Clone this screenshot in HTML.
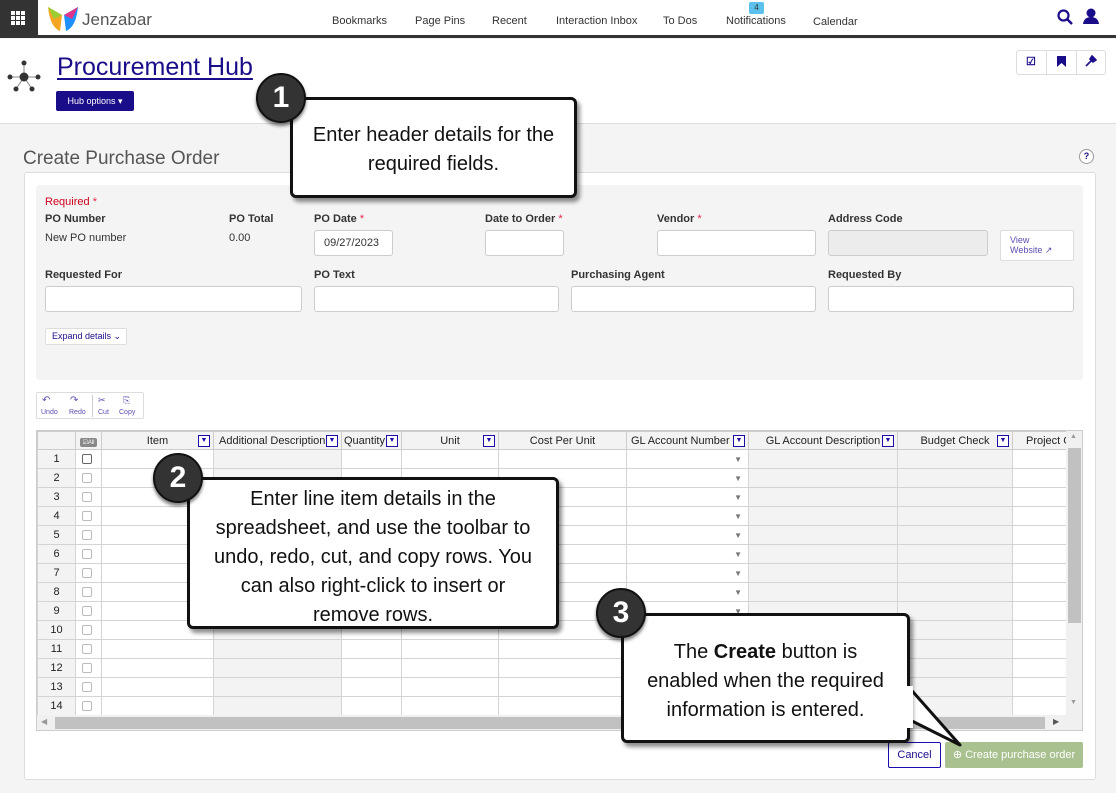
<!DOCTYPE html>
<html><head><meta charset="utf-8"><style>
*{box-sizing:border-box;margin:0;padding:0}
body{width:1116px;height:793px;position:relative;overflow:hidden;background:#f4f4f4;font-family:"Liberation Sans",Arial,sans-serif;color:#333}
.a{position:absolute}
.top{left:0;top:0;width:1116px;height:38px;background:#fff;border-bottom:3px solid #333}
.nav{top:15px;font-size:11px;color:#333}
.lbl{font-size:11px;font-weight:bold;color:#333}
.star{color:#e0284a;font-weight:normal}
.inp{background:#fff;border:1px solid #ccc;border-radius:3px;height:26px}
table{border-collapse:collapse;table-layout:fixed;font-size:11px}
td{border:1px solid #d4d4d4;height:19px;padding:0}
th{border:1px solid #ccc;height:18px;background:#f3f3f3;font-weight:normal;color:#222;font-size:11px;position:relative;white-space:nowrap;overflow:hidden}
.fb{position:absolute;right:3px;top:3px;width:12px;height:12px;border:1px solid #1a0dab;background:#fff;font-size:7px;line-height:10px;color:#1a0dab;text-align:center}
.g{background:#f3f3f3}
.rn{background:#f3f3f3;text-align:center;color:#222}
.cb{display:inline-block;width:10px;height:10px;border:1px solid #bbb;border-radius:2px;margin-left:6px;vertical-align:middle}
.dd{text-align:right;color:#777;font-size:8px;padding-right:6px}
.box{background:#fff;border:3px solid #111;border-radius:6px;box-shadow:3px 4px 4px rgba(0,0,0,.45);font-family:"Liberation Sans",sans-serif;font-size:20px;color:#111;text-align:center;line-height:29px}
.circ{width:50px;height:50px;border-radius:50%;background:#333;border:2px solid #111;box-shadow:0 3px 3px rgba(0,0,0,.5);color:#fff;font-weight:bold;font-size:30px;text-align:center;line-height:46px}
</style></head><body>
<div class="a top"></div>
<div class="a" style="left:0;top:0;width:38px;height:36px;background:#333"></div>
<svg class="a" style="left:11px;top:11px" width="14" height="14"><g fill="#fff"><rect x="0" y="0" width="4" height="4"/><rect x="5" y="0" width="4" height="4"/><rect x="10" y="0" width="4" height="4"/><rect x="0" y="5" width="4" height="4"/><rect x="5" y="5" width="4" height="4"/><rect x="10" y="5" width="4" height="4"/><rect x="0" y="10" width="4" height="4"/><rect x="5" y="10" width="4" height="4"/><rect x="10" y="10" width="4" height="4"/></g></svg>
<svg class="a" style="left:46px;top:5px" width="34" height="28"><path d="M2 2 L16 10 L14 26 Q4 22 2 2Z" fill="#f5a623"/><path d="M2 2 L16 10 L8 14Z" fill="#9acd32"/><path d="M32 2 L18 10 L20 26 Q30 22 32 2Z" fill="#1e90ff"/><path d="M32 2 L18 10 L26 14Z" fill="#e0338a"/></svg>
<div class="a" style="left:82px;top:10px;font-size:17px;color:#555">Jenzabar</div>
<div class="a nav" style="left:332px">Bookmarks</div>
<div class="a nav" style="left:415px">Page Pins</div>
<div class="a nav" style="left:492px">Recent</div>
<div class="a nav" style="left:556px">Interaction Inbox</div>
<div class="a nav" style="left:663px">To Dos</div>
<div class="a" style="left:749px;top:2px;width:15px;height:12px;background:#5bc0eb;border-radius:2px;font-size:8px;text-align:center;line-height:12px">4</div>
<div class="a nav" style="left:726px;top:15px">Notifications</div>
<div class="a nav" style="left:813px;top:16px">Calendar</div>
<svg class="a" style="left:1057px;top:9px" width="16" height="16"><circle cx="6.5" cy="6.5" r="5" fill="none" stroke="#1a0d8a" stroke-width="2.2"/><line x1="10" y1="10" x2="15" y2="15" stroke="#1a0d8a" stroke-width="2.5"/></svg>
<svg class="a" style="left:1083px;top:8px" width="16" height="16"><circle cx="8" cy="5" r="4.5" fill="#1a0d8a"/><path d="M0 16 Q1 9 8 9 Q15 9 16 16Z" fill="#1a0d8a"/></svg>
<div class="a" style="left:0;top:39px;width:1116px;height:85px;background:#fff;border-bottom:1px solid #ddd"></div>
<svg class="a" style="left:6px;top:60px" width="36" height="34"><g stroke="#888" stroke-width="1"><line x1="18" y1="17" x2="18" y2="3"/><line x1="18" y1="17" x2="4" y2="17"/><line x1="18" y1="17" x2="32" y2="17"/><line x1="18" y1="17" x2="10" y2="29"/><line x1="18" y1="17" x2="26" y2="29"/></g><g fill="#333"><circle cx="18" cy="17" r="4.5"/><circle cx="18" cy="3" r="2.5"/><circle cx="4" cy="17" r="2.5"/><circle cx="32" cy="17" r="2.5"/><circle cx="10" cy="29" r="2.5"/><circle cx="26" cy="29" r="2.5"/></g></svg>
<div class="a" style="left:57px;top:53px;font-size:25px;color:#1a0d8a;text-decoration:underline;text-underline-offset:3px">Procurement Hub</div>
<div class="a" style="left:56px;top:91px;width:78px;height:20px;background:#1a0d8a;border-radius:2px;color:#fff;font-size:9px;line-height:20px;text-align:center">Hub options ▾</div>
<div class="a" style="left:1016px;top:50px;width:90px;height:25px;background:#fff;border:1px solid #ddd;border-radius:3px"></div>
<div class="a" style="left:1046px;top:51px;width:1px;height:23px;background:#ddd"></div>
<div class="a" style="left:1076px;top:51px;width:1px;height:23px;background:#ddd"></div>
<div class="a" style="left:1026px;top:55px;font-size:11px;color:#1a0d8a;font-weight:bold">☑</div>
<svg class="a" style="left:1057px;top:56px" width="9" height="11"><path d="M0 0H9V11L4.5 7L0 11Z" fill="#1a0d8a"/></svg>
<svg class="a" style="left:1085px;top:55px" width="12" height="12"><path d="M1 11L6 6M5 3L9 7M7 1L11 5L8 7L5 4Z" stroke="#1a0d8a" stroke-width="1.6" fill="#1a0d8a"/></svg>
<div class="a" style="left:23px;top:148px;font-size:19px;color:#555">Create Purchase Order</div>
<div class="a" style="left:1079px;top:149px;width:15px;height:15px;border-radius:50%;border:1px solid #999;background:#fff;font-size:9px;text-align:center;line-height:13px;color:#1a0d8a;font-weight:bold">?</div>
<div class="a" style="left:24px;top:172px;width:1072px;height:608px;background:#fff;border:1px solid #ddd;border-radius:3px"></div>
<div class="a" style="left:36px;top:185px;width:1047px;height:195px;background:#f4f4f4;border-radius:3px"></div>
<div class="a" style="left:45px;top:196px;font-size:11px;color:#d0021b">Required <span class="star" style="vertical-align:top">*</span></div>
<div class="a lbl" style="left:45px;top:213px">PO Number</div>
<div class="a" style="left:45px;top:232px;font-size:11px">New PO number</div>
<div class="a lbl" style="left:229px;top:213px">PO Total</div>
<div class="a" style="left:229px;top:232px;font-size:11px">0.00</div>
<div class="a lbl" style="left:314px;top:213px">PO Date <span class="star">*</span></div>
<div class="a inp" style="left:314px;top:230px;width:79px;font-size:11px;line-height:24px;padding-left:9px">09/27/2023</div>
<div class="a lbl" style="left:485px;top:213px">Date to Order <span class="star">*</span></div>
<div class="a inp" style="left:485px;top:230px;width:79px"></div>
<div class="a lbl" style="left:657px;top:213px">Vendor <span class="star">*</span></div>
<div class="a inp" style="left:657px;top:230px;width:159px"></div>
<div class="a lbl" style="left:828px;top:213px">Address Code</div>
<div class="a inp" style="left:828px;top:230px;width:160px;background:#ececec"></div>
<div class="a" style="left:1000px;top:230px;width:74px;height:31px;background:#fff;border:1px solid #ddd;border-radius:2px;font-size:9px;color:#5a4fb0;padding:4px 0 0 9px;line-height:10px">View<br>Website ↗</div>
<div class="a lbl" style="left:45px;top:269px">Requested For</div>
<div class="a inp" style="left:45px;top:286px;width:257px"></div>
<div class="a lbl" style="left:314px;top:269px">PO Text</div>
<div class="a inp" style="left:314px;top:286px;width:245px"></div>
<div class="a lbl" style="left:571px;top:269px">Purchasing Agent</div>
<div class="a inp" style="left:571px;top:286px;width:245px"></div>
<div class="a lbl" style="left:828px;top:269px">Requested By</div>
<div class="a inp" style="left:828px;top:286px;width:246px"></div>
<div class="a" style="left:45px;top:328px;width:82px;height:17px;background:#fff;border:1px solid #ddd;border-radius:2px;font-size:9px;color:#1a0d8a;line-height:15px;padding-left:6px">Expand details ⌄</div>
<div class="a" style="left:36px;top:392px;width:108px;height:27px;background:#fff;border:1px solid #ddd;border-radius:2px;font-size:7px;color:#5a4fb0"><span class="a" style="left:5px;top:2px;font-size:10px">↶</span><span class="a" style="left:33px;top:2px;font-size:10px">↷</span><span class="a" style="left:4px;top:16px">Undo</span><span class="a" style="left:32px;top:16px">Redo</span><span class="a" style="left:55px;top:2px;width:1px;height:22px;background:#ccc"></span><span class="a" style="left:61px;top:2px;font-size:9px">✂</span><span class="a" style="left:86px;top:2px;font-size:9px">⎘</span><span class="a" style="left:61px;top:16px">Cut</span><span class="a" style="left:82px;top:16px">Copy</span></div>
<div class="a" style="left:36px;top:430px;width:1047px;height:301px;border:1px solid #ccc;overflow:hidden;background:#fff">
<table style="width:1100px">
<colgroup><col style="width:38px"><col style="width:26px"><col style="width:112px"><col style="width:128px"><col style="width:60px"><col style="width:97px"><col style="width:128px"><col style="width:122px"><col style="width:149px"><col style="width:115px"><col style="width:125px"></colgroup>
<tr><th></th><th><span style="display:inline-block;background:#888;color:#fff;font-size:6px;padding:1px 2px;border-radius:2px">☑All</span></th><th>Item<span class="fb">▼</span></th><th style="text-align:left;padding-left:5px">Additional Description<span class="fb">▼</span></th><th style="text-align:left;padding-left:2px">Quantity<span class="fb">▼</span></th><th>Unit<span class="fb">▼</span></th><th>Cost Per Unit</th><th style="text-align:left;padding-left:4px">GL Account Number<span class="fb">▼</span></th><th>GL Account Description<span class="fb">▼</span></th><th>Budget Check<span class="fb">▼</span></th><th style="text-align:left;padding-left:13px">Project C</th></tr>
<tr><td class="rn">1</td><td><span class="cb" style="border-color:#666"></span></td><td></td><td class="g"></td><td></td><td></td><td></td><td class="dd">▼</td><td class="g"></td><td class="g"></td><td></td></tr>
<tr><td class="rn">2</td><td><span class="cb"></span></td><td></td><td class="g"></td><td></td><td></td><td></td><td class="dd">▼</td><td class="g"></td><td class="g"></td><td></td></tr>
<tr><td class="rn">3</td><td><span class="cb"></span></td><td></td><td class="g"></td><td></td><td></td><td></td><td class="dd">▼</td><td class="g"></td><td class="g"></td><td></td></tr>
<tr><td class="rn">4</td><td><span class="cb"></span></td><td></td><td class="g"></td><td></td><td></td><td></td><td class="dd">▼</td><td class="g"></td><td class="g"></td><td></td></tr>
<tr><td class="rn">5</td><td><span class="cb"></span></td><td></td><td class="g"></td><td></td><td></td><td></td><td class="dd">▼</td><td class="g"></td><td class="g"></td><td></td></tr>
<tr><td class="rn">6</td><td><span class="cb"></span></td><td></td><td class="g"></td><td></td><td></td><td></td><td class="dd">▼</td><td class="g"></td><td class="g"></td><td></td></tr>
<tr><td class="rn">7</td><td><span class="cb"></span></td><td></td><td class="g"></td><td></td><td></td><td></td><td class="dd">▼</td><td class="g"></td><td class="g"></td><td></td></tr>
<tr><td class="rn">8</td><td><span class="cb"></span></td><td></td><td class="g"></td><td></td><td></td><td></td><td class="dd">▼</td><td class="g"></td><td class="g"></td><td></td></tr>
<tr><td class="rn">9</td><td><span class="cb"></span></td><td></td><td class="g"></td><td></td><td></td><td></td><td class="dd">▼</td><td class="g"></td><td class="g"></td><td></td></tr>
<tr><td class="rn">10</td><td><span class="cb"></span></td><td></td><td class="g"></td><td></td><td></td><td></td><td class="dd">▼</td><td class="g"></td><td class="g"></td><td></td></tr>
<tr><td class="rn">11</td><td><span class="cb"></span></td><td></td><td class="g"></td><td></td><td></td><td></td><td class="dd">▼</td><td class="g"></td><td class="g"></td><td></td></tr>
<tr><td class="rn">12</td><td><span class="cb"></span></td><td></td><td class="g"></td><td></td><td></td><td></td><td class="dd">▼</td><td class="g"></td><td class="g"></td><td></td></tr>
<tr><td class="rn">13</td><td><span class="cb"></span></td><td></td><td class="g"></td><td></td><td></td><td></td><td class="dd">▼</td><td class="g"></td><td class="g"></td><td></td></tr>
<tr><td class="rn">14</td><td><span class="cb"></span></td><td></td><td class="g"></td><td></td><td></td><td></td><td class="dd">▼</td><td class="g"></td><td class="g"></td><td></td></tr>
</table>
<div class="a" style="left:1029px;top:0;width:17px;height:284px;background:#f0f0f0"></div>
<div class="a" style="left:1031px;top:17px;width:13px;height:175px;background:#c1c1c1"></div>
<div class="a" style="left:1033px;top:2px;font-size:7px;color:#999">▲</div>
<div class="a" style="left:1033px;top:268px;font-size:7px;color:#999">▼</div>
<div class="a" style="left:0;top:284px;width:1047px;height:16px;background:#f0f0f0"></div>
<div class="a" style="left:18px;top:286px;width:990px;height:12px;background:#c1c1c1"></div>
<div class="a" style="left:4px;top:286px;font-size:8px;color:#999">◀</div>
<div class="a" style="left:1016px;top:286px;font-size:8px;color:#555">▶</div>
</div>
<div class="a" style="left:888px;top:742px;width:53px;height:26px;background:#fff;border:1px solid #1a0dab;border-radius:2px;font-size:11px;color:#1a0d8a;text-align:center;line-height:24px">Cancel</div>
<div class="a" style="left:945px;top:742px;width:138px;height:26px;background:#a9c18f;border-radius:2px;font-size:11px;color:#fff;text-align:center;line-height:26px">⊕ Create purchase order</div>
<div class="a box" style="left:290px;top:97px;width:287px;height:101px;padding-top:21px">Enter header details for the<br>required fields.</div>
<div class="a circ" style="left:256px;top:73px">1</div>
<div class="a box" style="left:187px;top:477px;width:372px;height:152px;padding-top:5px">Enter line item details in the<br>spreadsheet, and use the toolbar to<br>undo, redo, cut, and copy rows. You<br>can also right-click to insert or<br>remove rows.</div>
<div class="a circ" style="left:153px;top:453px">2</div>
<svg class="a" style="left:900px;top:680px" width="70" height="72"><path d="M6 4 L60 65 L6 38" fill="#fff" stroke="#111" stroke-width="3" stroke-linejoin="round"/></svg>
<div class="a box" style="left:621px;top:613px;width:289px;height:130px;padding-top:22px">The <b>Create</b> button is<br>enabled when the required<br>information is entered.</div>
<div class="a" style="left:906px;top:686px;width:7px;height:42px;background:#fff"></div>
<div class="a circ" style="left:596px;top:588px">3</div>
</body></html>
